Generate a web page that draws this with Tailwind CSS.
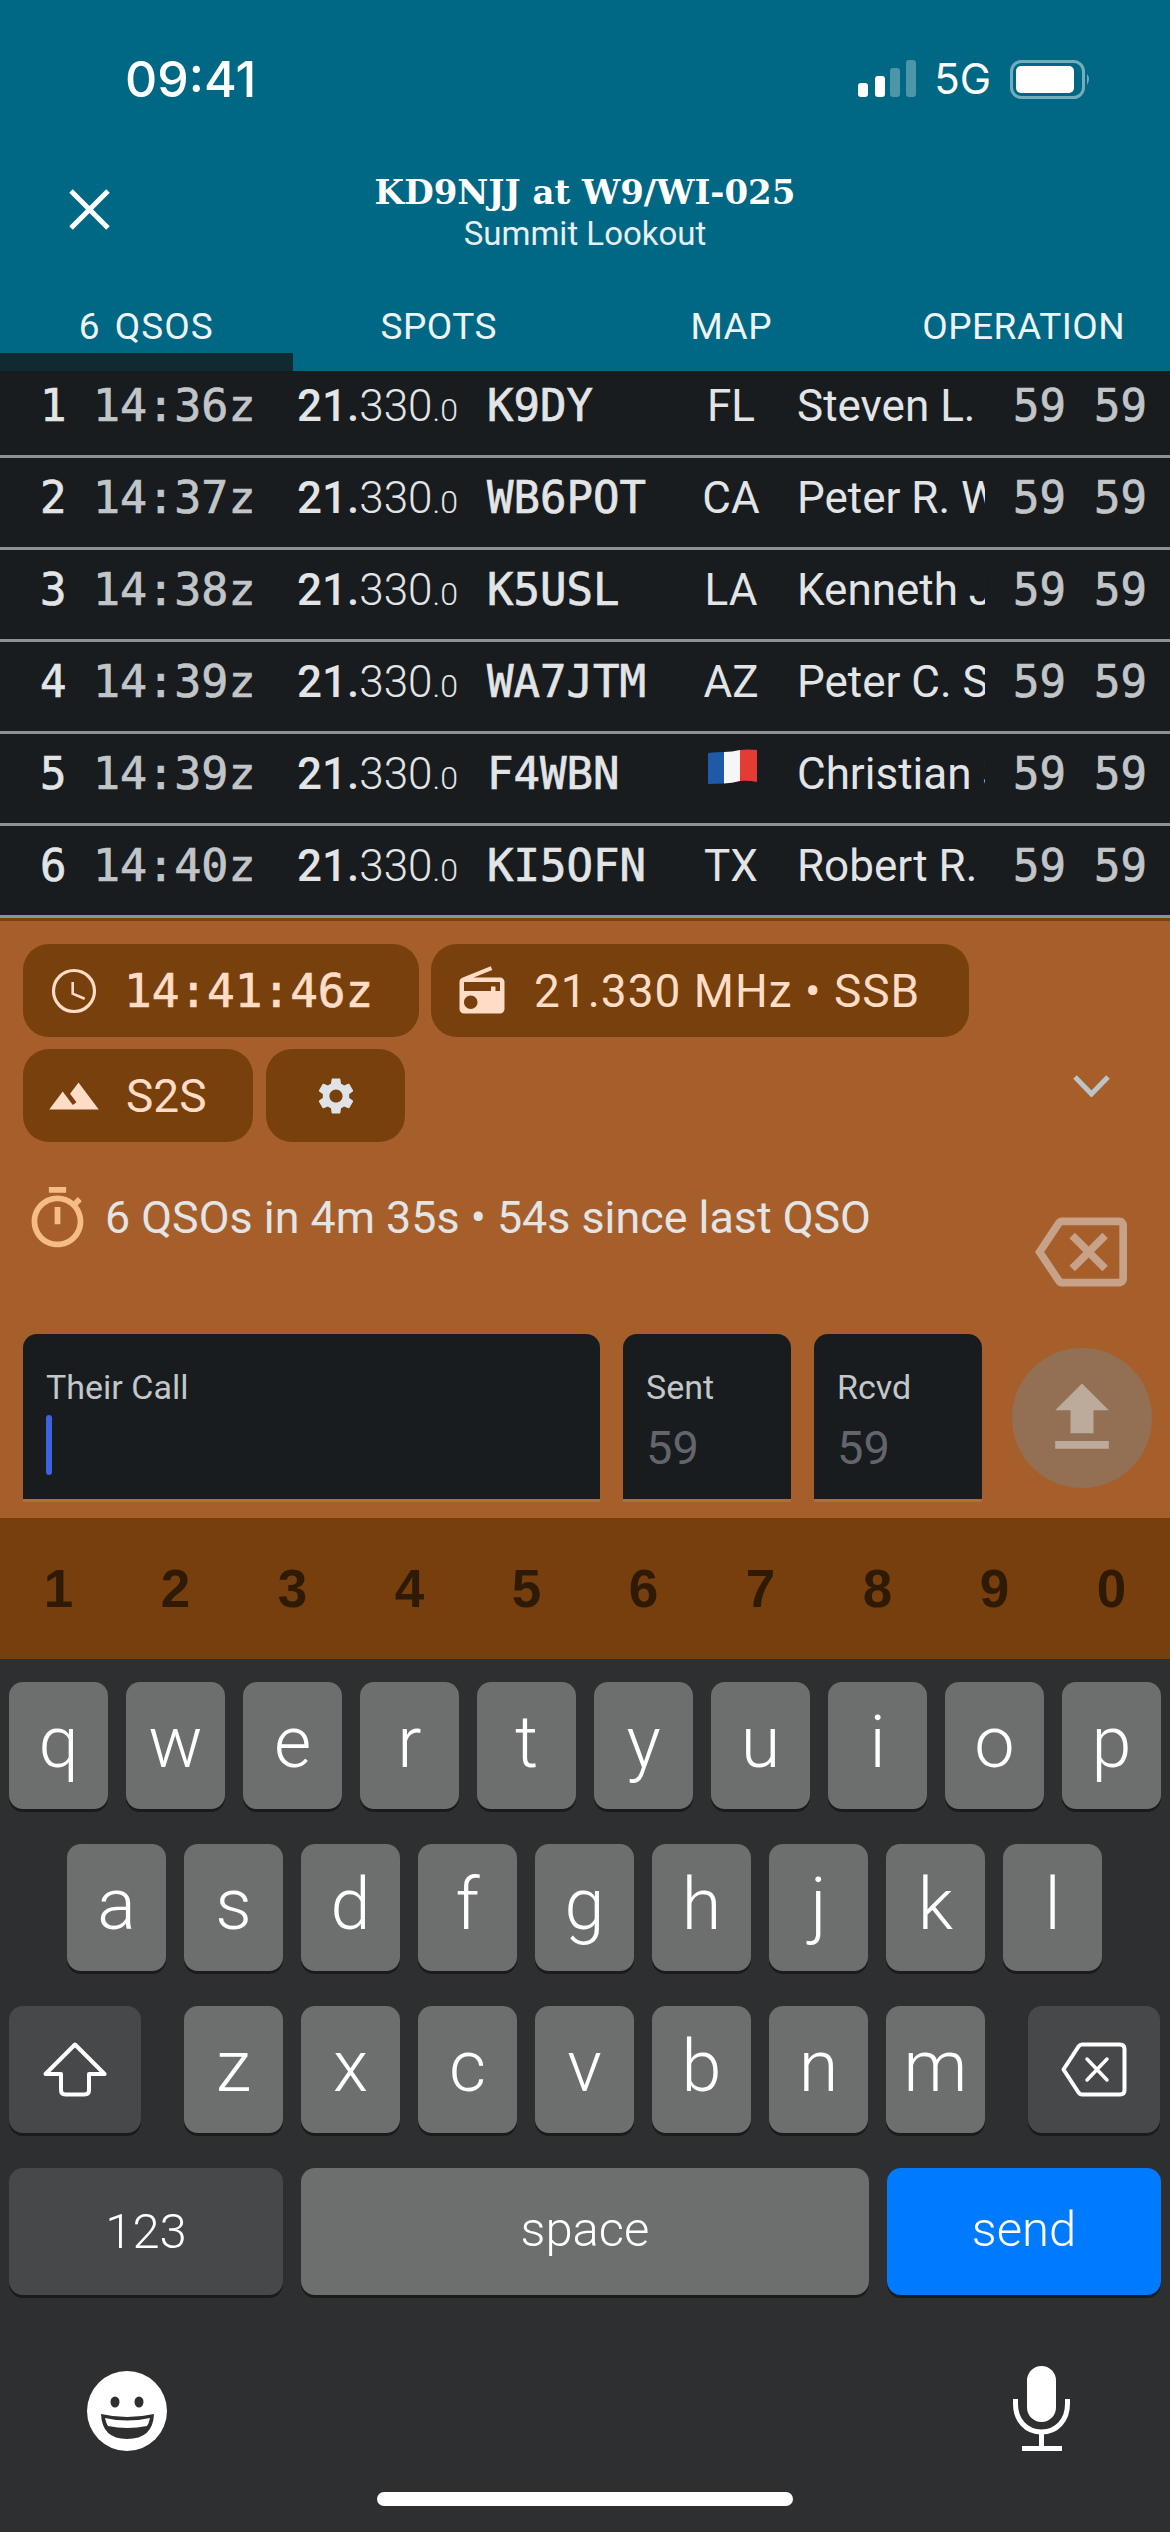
<!DOCTYPE html>
<html lang="en">
<head>
<meta charset="utf-8">
<title>Logger</title>
<script src="https://cdn.jsdelivr.net/npm/@tailwindcss/browser@4"></script>
</head>
<body class="m-0 bg-[#2e2f31] font-['Roboto',sans-serif]">
<div class="w-[1170px] h-[2532px] overflow-hidden flex flex-col">

  <!-- Header -->
  <header class="relative z-10 bg-[#006884] h-[371px] text-white shrink-0">
    <div class="h-[118px] pt-[40px] flex items-center pl-[125px] pr-[78px] font-['Inter',sans-serif]">
      <span class="text-[50px] font-medium leading-[78px]">09:41</span>
      <div class="ml-auto flex items-center">
        <svg width="58" height="38" viewBox="0 0 58 38" fill="#fff">
          <rect x="0" y="23" width="10" height="14" rx="3"/>
          <rect x="17" y="16" width="10" height="21" rx="3"/>
          <rect x="32" y="8" width="10" height="29" rx="3" fill-opacity=".3"/>
          <rect x="48" y="0" width="10" height="37" rx="3" fill-opacity=".3"/>
        </svg>
        <span class="ml-[18px] text-[42px] leading-[40px]">5G</span>
        <svg class="ml-[19px]" width="82" height="39" viewBox="0 0 82 39" fill="none">
          <rect x="1.5" y="1.5" width="72" height="36" rx="10" stroke="#fff" stroke-opacity=".45" stroke-width="3"/>
          <rect x="6" y="6" width="58" height="27" rx="5" fill="#fff"/>
          <path d="M77 14 Q81 19 77 25Z" fill="#fff" fill-opacity=".45"/>
        </svg>
      </div>
    </div>
    <div class="h-[182px] flex items-center">
      <div class="w-[170px] pl-[69px]">
        <svg class="block" width="41" height="41" viewBox="0 0 41 41" fill="none" stroke="#fff" stroke-width="5">
          <path d="M2 2 39 39M39 2 2 39"/>
        </svg>
      </div>
      <div class="flex-1 text-center pt-[6px]">
        <div class="font-['DejaVu_Serif',serif] font-bold text-[34px] leading-[44px]">KD9NJJ at W9/WI-025</div>
        <div class="text-[33px] leading-[40px] text-[#e6eff2]">Summit Lookout</div>
      </div>
      <div class="w-[170px]"></div>
    </div>
    <nav class="flex h-[71px] text-[37px] tracking-[0.5px] text-center text-[#eef4f6]">
      <div class="flex-1 flex flex-col"><span class="h-[53px] leading-[53px] tracking-[1px] [word-spacing:4px]">6 QSOS</span><span class="h-[18px] bg-[#0f2a30]"></span></div>
      <div class="flex-1"><span class="block h-[53px] leading-[53px]">SPOTS</span></div>
      <div class="flex-1"><span class="block h-[53px] leading-[53px]">MAP</span></div>
      <div class="flex-1"><span class="block h-[53px] leading-[53px]">OPERATION</span></div>
    </nav>
  </header>

  <!-- QSO list -->
  <section class="-mt-[5px] bg-[#181c1f] text-[44px] leading-[44px] text-[#e2e4e6] shrink-0">
    <div class="flex h-[92px] pt-[18px] pl-[40px] border-b-[3px] border-[#8d9294]">
      <span class="w-[53px] font-['DejaVu_Sans_Mono',monospace] [-webkit-text-stroke:0.7px]">1</span>
      <span class="w-[204px] font-['DejaVu_Sans_Mono',monospace] text-[45px] text-[#c2c5c8] [-webkit-text-stroke:0.7px]">14:36z</span>
      <span class="w-[190px]"><span class="font-medium">21.</span><span class="font-light">330</span><span class="text-[32px] font-light">.0</span></span>
      <span class="w-[203px] font-['DejaVu_Sans_Mono',monospace] [-webkit-text-stroke:0.7px]">K9DY</span>
      <span class="w-[82px] text-center">FL</span>
      <span class="ml-[25px] w-[188px] overflow-hidden whitespace-nowrap">Steven L.</span>
      <span class="ml-[28px] w-[81px] font-['DejaVu_Sans_Mono',monospace] text-[#c2c5c8] [-webkit-text-stroke:0.7px]">59</span>
      <span class="font-['DejaVu_Sans_Mono',monospace] text-[#c2c5c8] [-webkit-text-stroke:0.7px]">59</span>
    </div>
    <div class="flex h-[92px] pt-[18px] pl-[40px] border-b-[3px] border-[#8d9294]">
      <span class="w-[53px] font-['DejaVu_Sans_Mono',monospace] [-webkit-text-stroke:0.7px]">2</span>
      <span class="w-[204px] font-['DejaVu_Sans_Mono',monospace] text-[45px] text-[#c2c5c8] [-webkit-text-stroke:0.7px]">14:37z</span>
      <span class="w-[190px]"><span class="font-medium">21.</span><span class="font-light">330</span><span class="text-[32px] font-light">.0</span></span>
      <span class="w-[203px] font-['DejaVu_Sans_Mono',monospace] [-webkit-text-stroke:0.7px]">WB6POT</span>
      <span class="w-[82px] text-center">CA</span>
      <span class="ml-[25px] w-[188px] overflow-hidden whitespace-nowrap">Peter R. Wilson</span>
      <span class="ml-[28px] w-[81px] font-['DejaVu_Sans_Mono',monospace] text-[#c2c5c8] [-webkit-text-stroke:0.7px]">59</span>
      <span class="font-['DejaVu_Sans_Mono',monospace] text-[#c2c5c8] [-webkit-text-stroke:0.7px]">59</span>
    </div>
    <div class="flex h-[92px] pt-[18px] pl-[40px] border-b-[3px] border-[#8d9294]">
      <span class="w-[53px] font-['DejaVu_Sans_Mono',monospace] [-webkit-text-stroke:0.7px]">3</span>
      <span class="w-[204px] font-['DejaVu_Sans_Mono',monospace] text-[45px] text-[#c2c5c8] [-webkit-text-stroke:0.7px]">14:38z</span>
      <span class="w-[190px]"><span class="font-medium">21.</span><span class="font-light">330</span><span class="text-[32px] font-light">.0</span></span>
      <span class="w-[203px] font-['DejaVu_Sans_Mono',monospace] [-webkit-text-stroke:0.7px]">K5USL</span>
      <span class="w-[82px] text-center">LA</span>
      <span class="ml-[25px] w-[188px] overflow-hidden whitespace-nowrap">Kenneth J. Smith</span>
      <span class="ml-[28px] w-[81px] font-['DejaVu_Sans_Mono',monospace] text-[#c2c5c8] [-webkit-text-stroke:0.7px]">59</span>
      <span class="font-['DejaVu_Sans_Mono',monospace] text-[#c2c5c8] [-webkit-text-stroke:0.7px]">59</span>
    </div>
    <div class="flex h-[92px] pt-[18px] pl-[40px] border-b-[3px] border-[#8d9294]">
      <span class="w-[53px] font-['DejaVu_Sans_Mono',monospace] [-webkit-text-stroke:0.7px]">4</span>
      <span class="w-[204px] font-['DejaVu_Sans_Mono',monospace] text-[45px] text-[#c2c5c8] [-webkit-text-stroke:0.7px]">14:39z</span>
      <span class="w-[190px]"><span class="font-medium">21.</span><span class="font-light">330</span><span class="text-[32px] font-light">.0</span></span>
      <span class="w-[203px] font-['DejaVu_Sans_Mono',monospace] [-webkit-text-stroke:0.7px]">WA7JTM</span>
      <span class="w-[82px] text-center">AZ</span>
      <span class="ml-[25px] w-[188px] overflow-hidden whitespace-nowrap">Peter C. Smith</span>
      <span class="ml-[28px] w-[81px] font-['DejaVu_Sans_Mono',monospace] text-[#c2c5c8] [-webkit-text-stroke:0.7px]">59</span>
      <span class="font-['DejaVu_Sans_Mono',monospace] text-[#c2c5c8] [-webkit-text-stroke:0.7px]">59</span>
    </div>
    <div class="flex h-[92px] pt-[18px] pl-[40px] border-b-[3px] border-[#8d9294]">
      <span class="w-[53px] font-['DejaVu_Sans_Mono',monospace] [-webkit-text-stroke:0.7px]">5</span>
      <span class="w-[204px] font-['DejaVu_Sans_Mono',monospace] text-[45px] text-[#c2c5c8] [-webkit-text-stroke:0.7px]">14:39z</span>
      <span class="w-[190px]"><span class="font-medium">21.</span><span class="font-light">330</span><span class="text-[32px] font-light">.0</span></span>
      <span class="w-[203px] font-['DejaVu_Sans_Mono',monospace] [-webkit-text-stroke:0.7px]">F4WBN</span>
      <span class="w-[82px] pl-[18px]">
        <svg class="block -mt-[3px]" width="49" height="35" viewBox="0 0 49 35">
          <path d="M0 4 Q8 3 16 3 V34.5 Q8 34.5 0 35Z" fill="#1f5aa8"/>
          <path d="M16 3 Q24 3 32 1 V32 Q24 34 16 34.5Z" fill="#f6f6f6"/>
          <path d="M32 1 Q40 0 49 1 V33 Q40 31 32 32Z" fill="#e53b35"/>
        </svg>
      </span>
      <span class="ml-[25px] w-[188px] overflow-hidden whitespace-nowrap">Christian Schmidt</span>
      <span class="ml-[28px] w-[81px] font-['DejaVu_Sans_Mono',monospace] text-[#c2c5c8] [-webkit-text-stroke:0.7px]">59</span>
      <span class="font-['DejaVu_Sans_Mono',monospace] text-[#c2c5c8] [-webkit-text-stroke:0.7px]">59</span>
    </div>
    <div class="flex h-[92px] pt-[18px] pl-[40px] border-b-[3px] border-[#8d9294]">
      <span class="w-[53px] font-['DejaVu_Sans_Mono',monospace] [-webkit-text-stroke:0.7px]">6</span>
      <span class="w-[204px] font-['DejaVu_Sans_Mono',monospace] text-[45px] text-[#c2c5c8] [-webkit-text-stroke:0.7px]">14:40z</span>
      <span class="w-[190px]"><span class="font-medium">21.</span><span class="font-light">330</span><span class="text-[32px] font-light">.0</span></span>
      <span class="w-[203px] font-['DejaVu_Sans_Mono',monospace] [-webkit-text-stroke:0.7px]">KI5OFN</span>
      <span class="w-[82px] text-center">TX</span>
      <span class="ml-[25px] w-[188px] overflow-hidden whitespace-nowrap">Robert R.</span>
      <span class="ml-[28px] w-[81px] font-['DejaVu_Sans_Mono',monospace] text-[#c2c5c8] [-webkit-text-stroke:0.7px]">59</span>
      <span class="font-['DejaVu_Sans_Mono',monospace] text-[#c2c5c8] [-webkit-text-stroke:0.7px]">59</span>
    </div>
  </section>

  <!-- Log panel -->
  <section class="bg-[#a65f2b] border-t-[3px] border-[#7a420f] h-[600px] shrink-0 pt-[23px] pl-[23px]">
    <div class="flex gap-[12px]">
      <div class="h-[93px] w-[396px] rounded-[26px] bg-[#78400d] pl-[24px] flex items-center text-[#fedcc6]">
        <svg class="block" width="54" height="54" viewBox="0 0 54 54" fill="none" stroke="#fedcc6">
          <circle cx="27" cy="27" r="20.5" stroke-width="3.2"/>
          <path d="M25.7 19V30.7L37.7 35.7" stroke-width="2.6" transform="translate(0 -1)"/>
        </svg>
        <span class="ml-[23px] font-['DejaVu_Sans_Mono',monospace] text-[46px] leading-[44px] [-webkit-text-stroke:0.7px]">14:41:46z</span>
      </div>
      <div class="h-[93px] w-[538px] rounded-[26px] bg-[#78400d] pl-[24px] flex items-center text-[#fedcc6]">
        <svg class="block" width="54" height="54" viewBox="0 0 24 24" fill="#fedcc6">
          <path d="M3.24 6.15C2.51 6.43 2 7.17 2 8v12c0 1.1.89 2 2 2h16c1.11 0 2-.9 2-2V8c0-1.11-.89-2-2-2H8.3l8.26-3.34L15.88 1 3.24 6.15zM7 20c-1.66 0-3-1.34-3-3s1.34-3 3-3 3 1.34 3 3-1.34 3-3 3zm13-8h-2v-2h-2v2H4V8h16v4z"/>
        </svg>
        <span class="ml-[25px] text-[46px] leading-[44px] tracking-[1px]">21.330 MHz • SSB</span>
      </div>
    </div>
    <div class="flex gap-[13px] mt-[12px] items-center">
      <div class="h-[93px] w-[230px] rounded-[26px] bg-[#78400d] pl-[24px] flex items-center text-[#fedcc6]">
        <svg class="block" width="54" height="54" viewBox="0 0 24 24" fill="#fedcc6">
          <path d="M14 6l-3.75 5 2.85 3.8-1.6 1.2C9.81 13.75 7 10 7 10l-6 8h22L14 6z"/>
        </svg>
        <span class="ml-[25px] text-[46px] leading-[44px]">S2S</span>
      </div>
      <div class="h-[93px] w-[139px] rounded-[26px] bg-[#78400d] flex items-center justify-center">
        <svg class="block" width="44" height="44" viewBox="0 0 24 24" fill="#dfe3e6">
          <path d="M19.14 12.94c.04-.3.06-.61.06-.94 0-.32-.02-.64-.07-.94l2.03-1.58c.18-.14.23-.41.12-.61l-1.92-3.32c-.12-.22-.37-.29-.59-.22l-2.39.96c-.5-.38-1.03-.7-1.62-.94l-.36-2.54c-.04-.24-.24-.41-.48-.41h-3.84c-.24 0-.43.17-.47.41l-.36 2.54c-.59.24-1.13.57-1.62.94l-2.39-.96c-.22-.08-.47 0-.59.22L2.74 8.87c-.12.21-.08.47.12.61l2.03 1.58c-.05.3-.09.63-.09.94s.02.64.07.94l-2.03 1.58c-.18.14-.23.41-.12.61l1.92 3.32c.12.22.37.29.59.22l2.39-.96c.5.38 1.03.7 1.62.94l.36 2.54c.05.24.24.41.48.41h3.84c.24 0 .44-.17.47-.41l.36-2.54c.59-.24 1.13-.56 1.62-.94l2.39.96c.22.08.47 0 .59-.22l1.92-3.32c.12-.22.07-.47-.12-.61l-2.01-1.58zM12 15.6c-1.98 0-3.6-1.62-3.6-3.6s1.62-3.6 3.6-3.6 3.6 1.62 3.6 3.6-1.62 3.6-3.6 3.6z"/>
        </svg>
      </div>
      <svg class="block ml-auto mr-[60px] mb-[19px]" width="37" height="22" viewBox="0 0 37 22" fill="none" stroke="#bcc4c8" stroke-width="5">
        <path d="M2 2 18.5 19 35 2"/>
      </svg>
    </div>
    <div class="flex mt-[42px] h-[114px] pr-[43px]">
      <svg class="block shrink-0" width="69" height="69" viewBox="0 0 24 24" fill="#f5bd85">
        <path d="M9 1h6v2H9zM13 8h-2v6h2zM19.03 7.39l1.42-1.42c-.43-.51-.9-.99-1.41-1.41l-1.42 1.42C16.07 4.74 14.12 4 12 4c-4.97 0-9 4.03-9 9s4.02 9 9 9 9-4.03 9-9c0-2.12-.74-4.07-1.97-5.61zM12 20c-3.87 0-7-3.13-7-7s3.13-7 7-7 7 3.13 7 7-3.13 7-7 7z"/>
      </svg>
      <span class="ml-[13px] text-[44.800px] leading-[68px] text-[#e2e4e6] whitespace-nowrap">6 QSOs in 4m 35s • 54s since last QSO</span>
      <svg class="block ml-auto mt-[22px] shrink-0" width="92" height="92" viewBox="0 0 24 24" fill="#c7a288">
        <path d="M22 3H7c-.69 0-1.23.35-1.59.88L0 12l5.41 8.11c.36.53.9.89 1.59.89h15c1.1 0 2-.9 2-2V5c0-1.1-.9-2-2-2zm0 16H7.07L2.4 12l4.66-7H22v14zM10.41 17L14 13.41 17.59 17 19 15.59 15.41 12 19 8.41 17.59 7 14 10.59 10.41 7 9 8.41 12.59 12 9 15.59z"/>
      </svg>
    </div>
    <div class="flex mt-[36px]">
      <div class="w-[577px] h-[168px] rounded-t-[14px] bg-[#181c1f] border-b-[3px] border-[#a9713f] pl-[23px] pt-[37px]">
        <div class="text-[34px] leading-[32px] text-[#c3c7ca]">Their Call</div>
        <div class="mt-[12px] w-[6px] h-[60px] rounded-full bg-[#3d63e0]"></div>
      </div>
      <div class="ml-[23px] w-[168px] h-[168px] rounded-t-[14px] bg-[#181c1f] border-b-[3px] border-[#a9713f] pl-[23px] pt-[37px]">
        <div class="text-[34px] leading-[32px] text-[#c3c7ca]">Sent</div>
        <div class="mt-[23px] text-[47px] leading-[44px] text-[#62666c]">59</div>
      </div>
      <div class="ml-[23px] w-[168px] h-[168px] rounded-t-[14px] bg-[#181c1f] border-b-[3px] border-[#a9713f] pl-[23px] pt-[37px]">
        <div class="text-[34px] leading-[32px] text-[#c3c7ca]">Rcvd</div>
        <div class="mt-[23px] text-[47px] leading-[44px] text-[#62666c]">59</div>
      </div>
      <div class="ml-[30px] mt-[14px] w-[140px] h-[140px] rounded-full bg-[#937054] flex items-center justify-center">
        <svg class="block" width="92" height="92" viewBox="0 0 24 24" fill="#bcaa9a">
          <path d="M9 16h6v-6h4l-7-7-7 7h4zm-4 2h14v2H5z"/>
        </svg>
      </div>
    </div>
  </section>

  <!-- Number row -->
  <div class="h-[141px] bg-[#763f0d] flex items-center font-['Liberation_Sans',sans-serif] font-bold text-[53px] text-[#2f1b05] text-center shrink-0">
    <span class="flex-1">1</span><span class="flex-1">2</span><span class="flex-1">3</span><span class="flex-1">4</span><span class="flex-1">5</span><span class="flex-1">6</span><span class="flex-1">7</span><span class="flex-1">8</span><span class="flex-1">9</span><span class="flex-1">0</span>
  </div>

  <!-- Keyboard -->
  <div class="flex-1 bg-[#2e2f31] pt-[23px] text-white font-[350]">
    <div class="flex gap-[18px] pl-[9px] text-[72px]">
      <div class="w-[99px] h-[127px] pb-[6px] rounded-[14px] bg-[#6d6e6e] shadow-[0_3px_0_#1b1b1d] flex items-center justify-center">q</div>
      <div class="w-[99px] h-[127px] pb-[6px] rounded-[14px] bg-[#6d6e6e] shadow-[0_3px_0_#1b1b1d] flex items-center justify-center">w</div>
      <div class="w-[99px] h-[127px] pb-[6px] rounded-[14px] bg-[#6d6e6e] shadow-[0_3px_0_#1b1b1d] flex items-center justify-center">e</div>
      <div class="w-[99px] h-[127px] pb-[6px] rounded-[14px] bg-[#6d6e6e] shadow-[0_3px_0_#1b1b1d] flex items-center justify-center">r</div>
      <div class="w-[99px] h-[127px] pb-[6px] rounded-[14px] bg-[#6d6e6e] shadow-[0_3px_0_#1b1b1d] flex items-center justify-center">t</div>
      <div class="w-[99px] h-[127px] pb-[6px] rounded-[14px] bg-[#6d6e6e] shadow-[0_3px_0_#1b1b1d] flex items-center justify-center">y</div>
      <div class="w-[99px] h-[127px] pb-[6px] rounded-[14px] bg-[#6d6e6e] shadow-[0_3px_0_#1b1b1d] flex items-center justify-center">u</div>
      <div class="w-[99px] h-[127px] pb-[6px] rounded-[14px] bg-[#6d6e6e] shadow-[0_3px_0_#1b1b1d] flex items-center justify-center">i</div>
      <div class="w-[99px] h-[127px] pb-[6px] rounded-[14px] bg-[#6d6e6e] shadow-[0_3px_0_#1b1b1d] flex items-center justify-center">o</div>
      <div class="w-[99px] h-[127px] pb-[6px] rounded-[14px] bg-[#6d6e6e] shadow-[0_3px_0_#1b1b1d] flex items-center justify-center">p</div>
    </div>
    <div class="flex gap-[18px] pl-[67px] mt-[35px] text-[72px]">
      <div class="w-[99px] h-[127px] pb-[6px] rounded-[14px] bg-[#6d6e6e] shadow-[0_3px_0_#1b1b1d] flex items-center justify-center">a</div>
      <div class="w-[99px] h-[127px] pb-[6px] rounded-[14px] bg-[#6d6e6e] shadow-[0_3px_0_#1b1b1d] flex items-center justify-center">s</div>
      <div class="w-[99px] h-[127px] pb-[6px] rounded-[14px] bg-[#6d6e6e] shadow-[0_3px_0_#1b1b1d] flex items-center justify-center">d</div>
      <div class="w-[99px] h-[127px] pb-[6px] rounded-[14px] bg-[#6d6e6e] shadow-[0_3px_0_#1b1b1d] flex items-center justify-center">f</div>
      <div class="w-[99px] h-[127px] pb-[6px] rounded-[14px] bg-[#6d6e6e] shadow-[0_3px_0_#1b1b1d] flex items-center justify-center">g</div>
      <div class="w-[99px] h-[127px] pb-[6px] rounded-[14px] bg-[#6d6e6e] shadow-[0_3px_0_#1b1b1d] flex items-center justify-center">h</div>
      <div class="w-[99px] h-[127px] pb-[6px] rounded-[14px] bg-[#6d6e6e] shadow-[0_3px_0_#1b1b1d] flex items-center justify-center">j</div>
      <div class="w-[99px] h-[127px] pb-[6px] rounded-[14px] bg-[#6d6e6e] shadow-[0_3px_0_#1b1b1d] flex items-center justify-center">k</div>
      <div class="w-[99px] h-[127px] pb-[6px] rounded-[14px] bg-[#6d6e6e] shadow-[0_3px_0_#1b1b1d] flex items-center justify-center">l</div>
    </div>
    <div class="flex gap-[18px] pl-[9px] mt-[35px] text-[72px]">
      <div class="w-[132px] h-[127px] mr-[25px] rounded-[14px] bg-[#47484a] shadow-[0_3px_0_#1b1b1d] flex items-center justify-center">
        <svg width="64" height="55" viewBox="0 0 64 55" fill="none" stroke="#fff" stroke-width="4" stroke-linejoin="round">
          <path d="M32 2.5 61.5 32H46V48Q46 52.5 41.500 52.500H22.500Q18 52.500 18 48V32H2.500Z"/>
        </svg>
      </div>
      <div class="w-[99px] h-[127px] pb-[6px] rounded-[14px] bg-[#6d6e6e] shadow-[0_3px_0_#1b1b1d] flex items-center justify-center">z</div>
      <div class="w-[99px] h-[127px] pb-[6px] rounded-[14px] bg-[#6d6e6e] shadow-[0_3px_0_#1b1b1d] flex items-center justify-center">x</div>
      <div class="w-[99px] h-[127px] pb-[6px] rounded-[14px] bg-[#6d6e6e] shadow-[0_3px_0_#1b1b1d] flex items-center justify-center">c</div>
      <div class="w-[99px] h-[127px] pb-[6px] rounded-[14px] bg-[#6d6e6e] shadow-[0_3px_0_#1b1b1d] flex items-center justify-center">v</div>
      <div class="w-[99px] h-[127px] pb-[6px] rounded-[14px] bg-[#6d6e6e] shadow-[0_3px_0_#1b1b1d] flex items-center justify-center">b</div>
      <div class="w-[99px] h-[127px] pb-[6px] rounded-[14px] bg-[#6d6e6e] shadow-[0_3px_0_#1b1b1d] flex items-center justify-center">n</div>
      <div class="w-[99px] h-[127px] pb-[6px] rounded-[14px] bg-[#6d6e6e] shadow-[0_3px_0_#1b1b1d] flex items-center justify-center">m</div>
      <div class="w-[132px] h-[127px] ml-[25px] rounded-[14px] bg-[#47484a] shadow-[0_3px_0_#1b1b1d] flex items-center justify-center">
        <svg width="66" height="55" viewBox="0 0 66 55" fill="none" stroke="#fff" stroke-width="4" stroke-linejoin="round" stroke-linecap="round">
          <path d="M21 2.500H59Q63.500 2.500 63.500 7V48Q63.500 52.500 59 52.500H21Q19 52.500 17.500 50.500L2.500 27.500 17.500 4.500Q19 2.500 21 2.500Z"/>
          <path d="M26 17 46 38M46 17 26 38" stroke-width="3.500"/>
        </svg>
      </div>
    </div>
    <div class="flex gap-[18px] pl-[9px] mt-[35px] text-[49px]">
      <div class="w-[274px] h-[127px] rounded-[14px] bg-[#47484a] shadow-[0_3px_0_#1b1b1d] flex items-center justify-center">123</div>
      <div class="w-[568px] h-[127px] pb-[4px] rounded-[14px] bg-[#6d6e6e] shadow-[0_3px_0_#1b1b1d] flex items-center justify-center">space</div>
      <div class="w-[274px] h-[127px] pb-[4px] rounded-[14px] bg-[#007aff] shadow-[0_3px_0_#1b1b1d] flex items-center justify-center">send</div>
    </div>
    <div class="flex mt-[71px] h-[85px] pl-[87px] pr-[100px] justify-between">
      <svg class="block mt-[5px]" width="80" height="80" viewBox="0 0 80 80">
        <circle cx="40" cy="40" r="40" fill="#fff"/>
        <ellipse cx="28" cy="31" rx="4.500" ry="5.500" fill="#2e2f31"/>
        <ellipse cx="52" cy="31" rx="4.500" ry="5.500" fill="#2e2f31"/>
        <path d="M14 43Q40 49 67 43Q66 68 40 68Q15 68 14 43Z" fill="#2e2f31"/>
        <path d="M18 47Q40 52 63 47Q62 52 60 55Q40 59 21 55Q19 52 18 47Z" fill="#fff"/>
      </svg>
      <svg class="block" width="57" height="85" viewBox="0 0 57 85" fill="none">
        <rect x="14" y="0" width="29" height="56" rx="14.500" fill="#fff"/>
        <path d="M2.500 33V38C2.500 54 13 66 28.500 66S54.500 54 54.500 38V33" stroke="#fff" stroke-width="5"/>
        <path d="M28.500 66V82M9 82.500H49" stroke="#fff" stroke-width="5"/>
      </svg>
    </div>
    <div class="mt-[41px] mx-auto w-[416px] h-[14px] rounded-full bg-white"></div>
  </div>
</div>
</body>
</html>
